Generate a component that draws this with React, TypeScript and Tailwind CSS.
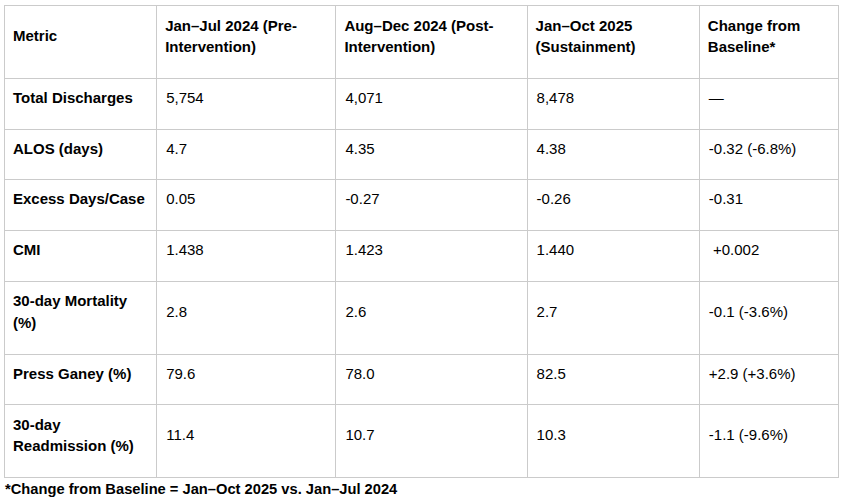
import React from "react";

const rows: { metric: string; v: string[]; h: string }[] = [
  { metric: "Total Discharges", v: ["5,754", "4,071", "8,478", "—"], h: "h-[50px]" },
  { metric: "ALOS (days)", v: ["4.7", "4.35", "4.38", "-0.32 (-6.8%)"], h: "h-[50px]" },
  { metric: "Excess Days/Case", v: ["0.05", "-0.27", "-0.26", "-0.31"], h: "h-[51px]" },
  { metric: "CMI", v: ["1.438", "1.423", "1.440", "\u00a0+0.002"], h: "h-[50px]" },
  { metric: "30-day Mortality (%)", v: ["2.8", "2.6", "2.7", "-0.1 (-3.6%)"], h: "h-[73px]" },
  { metric: "Press Ganey (%)", v: ["79.6", "78.0", "82.5", "+2.9 (+3.6%)"], h: "h-[50px]" },
  { metric: "30-day Readmission (%)", v: ["11.4", "10.7", "10.3", "-1.1 (-9.6%)"], h: "h-[73px]" },
];

const headers = [
  "Metric",
  "Jan–Jul 2024 (Pre-Intervention)",
  "Aug–Dec 2024 (Post-Intervention)",
  "Jan–Oct 2025 (Sustainment)",
  "Change from Baseline*",
];

const cell =
  "border border-[#cbcbcb] align-middle pt-[8px] pb-[20px] pl-[8px] pr-[6px] leading-[21.5px] text-left";

export default function App() {
  return (
    <div
      className="bg-white w-[851px] h-[500px] pl-[4px] pt-[5px] text-black text-[15px]"
      style={{ fontFamily: '"Liberation Sans", Arial, sans-serif' }}
    >
      <table className="table-fixed w-[835px] border-collapse">
        <colgroup>
          <col className="w-[152px]" />
          <col className="w-[179px]" />
          <col className="w-[191px]" />
          <col className="w-[172px]" />
          <col className="w-[139px]" />
        </colgroup>
        <thead>
          <tr className="h-[73px]">
            {headers.map((h) => (
              <th key={h} className={`${cell} font-bold`}>
                {h}
              </th>
            ))}
          </tr>
        </thead>
        <tbody>
          {rows.map((r) => (
            <tr key={r.metric} className={r.h}>
              <td className={`${cell} font-bold`}>{r.metric}</td>
              {r.v.map((x, i) => (
                <td key={i} className={`${cell} pl-[9px]`}>
                  {x}
                </td>
              ))}
            </tr>
          ))}
        </tbody>
      </table>
      <div className="font-bold text-[14.7px] leading-[20px] pl-[1px] mt-[1px]">
        *Change from Baseline = Jan–Oct 2025 vs. Jan–Jul 2024
      </div>
    </div>
  );
}
